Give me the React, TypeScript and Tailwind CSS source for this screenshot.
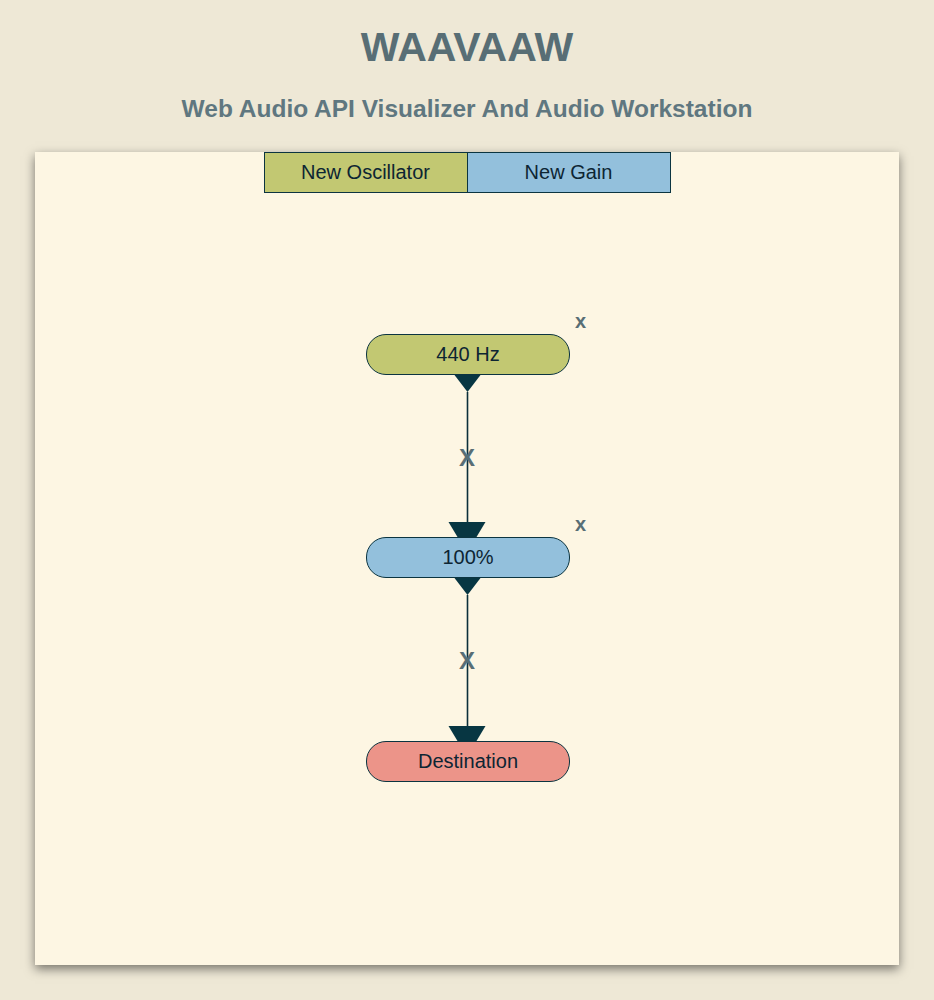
import React from "react";

const font = { fontFamily: '"Liberation Sans", Arial, Helvetica, sans-serif' };

type Node = { id: string; label: string; top: number; color: string; closable: boolean };

const nodes: Node[] = [
  { id: "osc", label: "440 Hz", top: 182, color: "bg-[#c2c872]", closable: true },
  { id: "gain", label: "100%", top: 385, color: "bg-[#93c0dc]", closable: true },
  { id: "dest", label: "Destination", top: 589, color: "bg-[#ec9489]", closable: false },
];

const CX = 432.5;

function Pill({ node }: { node: Node }) {
  return (
    <>
      <div
        className={`absolute left-[331px] w-[204px] h-[41px] rounded-[20px] border border-[#0b3440] ${node.color} flex items-center justify-center pb-px text-[20px] text-[#0d2533]`}
        style={{ top: node.top }}
      >
        {node.label}
      </div>
      {node.closable && (
        <div
          className="absolute left-[540px] text-[20px] font-bold leading-none text-[#586e75] cursor-pointer"
          style={{ top: node.top - 23 }}
        >
          x
        </div>
      )}
    </>
  );
}

function Wires() {
  const out = (y: number) => `${CX - 13},${y} ${CX + 13},${y} ${CX},${y + 17}`;
  const inp = (y: number) => `${CX - 19},${y - 15} ${CX + 18},${y - 15} ${CX + 9},${y} ${CX - 10},${y}`;
  return (
    <svg className="absolute inset-0 w-full h-full pointer-events-none" width="865" height="813">
      <line x1={CX} y1={240} x2={CX} y2={371} stroke="#0b2f3a" strokeWidth="1.6" />
      <line x1={CX} y1={443} x2={CX} y2={575} stroke="#0b2f3a" strokeWidth="1.6" />
      <polygon points={out(223)} fill="#073642" />
      <polygon points={inp(385)} fill="#073642" />
      <polygon points={out(426)} fill="#073642" />
      <polygon points={inp(589)} fill="#073642" />
    </svg>
  );
}

export default function App() {
  return (
    <div className="min-h-[1000px] bg-[#eee8d6] pt-[27px] pb-[35px]" style={font}>
      <h1 className="text-center text-[41px] leading-none font-bold text-[#586e75]">WAAVAAW</h1>
      <h2 className="mt-[29px] text-center text-[24.5px] leading-none font-bold text-[#5f7780]">
        Web Audio API Visualizer And Audio Workstation
      </h2>
      <div className="relative mx-[35px] mt-[30px] h-[813px] bg-[#fdf6e3] shadow-[0_4px_10px_rgba(0,0,0,0.5)]">
        <div className="relative z-10 flex justify-center">
          <button className="w-[204px] h-[41px] border border-[#0b3440] bg-[#c2c872] text-[20px] text-[#0d2533]">
            New Oscillator
          </button>
          <button className="w-[204px] h-[41px] -ml-px border border-[#0b3440] bg-[#93c0dc] text-[20px] text-[#0d2533]">
            New Gain
          </button>
        </div>
        <Wires />
        <div className="absolute left-[424px] top-[294px] text-[24px] font-bold leading-none text-[#586e75]">X</div>
        <div className="absolute left-[424px] top-[497px] text-[24px] font-bold leading-none text-[#586e75]">X</div>
        {nodes.map((n) => (
          <Pill key={n.id} node={n} />
        ))}
      </div>
    </div>
  );
}
